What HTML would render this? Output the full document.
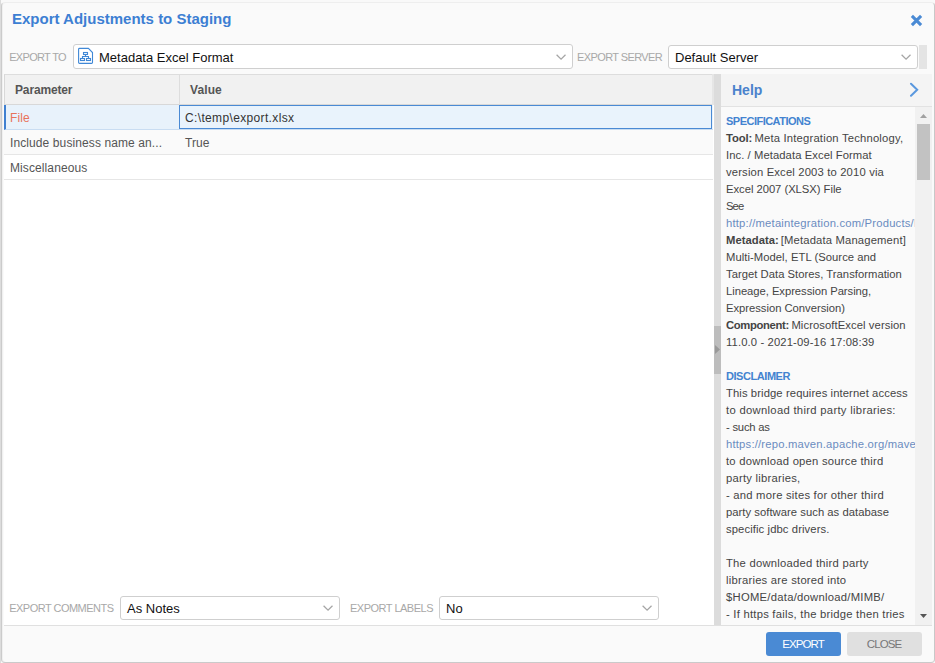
<!DOCTYPE html>
<html><head><meta charset="utf-8">
<style>
*{box-sizing:border-box;margin:0;padding:0}
html,body{width:935px;height:663px;overflow:hidden;background:#f9f9f9;font-family:"Liberation Sans",sans-serif}
.a{position:absolute}
.dlg{left:1px;top:2px;width:934px;height:661px;background:#fafafa;border:1px solid;border-color:#eeeeee #c8c8c8 #cacaca #cbcbcb;border-radius:4px;box-shadow:inset 1px 0 0 #f0f0f0}
.title{left:12px;top:10px;font-size:15px;line-height:18px;font-weight:bold;color:#3d7fd3;white-space:nowrap}
.lbl{font-size:11px;line-height:13px;color:#a8a8a8;white-space:nowrap}
.combo{background:#fff;border:1px solid #cfcfcf;border-radius:3px}
.ctext{font-size:13px;line-height:15px;color:#111;white-space:nowrap}
.chev{position:absolute;width:7px;height:7px;border-right:1px solid #888;border-bottom:1px solid #888;transform:rotate(45deg)}
.cell{font-size:12px;line-height:14px;color:#555;white-space:nowrap;letter-spacing:0.1px}
.hl{font-size:11.25px;line-height:17px;color:#444;white-space:nowrap}
.hl b{letter-spacing:-0.5px}
.hh{color:#4383d0;font-weight:bold}
.hl.hh{font-size:11px}
.hh{color:#4383d0;font-weight:bold}
.lnk{color:#6a8cc0}
.btn{border-radius:3px;font-size:11.5px;text-align:center;line-height:25px;letter-spacing:-0.9px;text-indent:-1px}
</style></head>
<body>
<div class="a" style="left:0;top:0;width:1px;height:663px;background:#dcdcdc"></div>
<div class="a dlg"></div>
<div class="a title">Export Adjustments to Staging</div>
<!-- close X -->
<svg class="a" style="left:910px;top:14px" width="13" height="13" viewBox="0 0 13 13"><path d="M1.9 1.9L11.1 11.1M11.1 1.9L1.9 11.1" stroke="#4a8ad4" stroke-width="3.1"/></svg>

<!-- top row -->
<div class="a lbl" style="left:9.2px;top:51px;letter-spacing:-0.675px">EXPORT TO</div>
<div class="a combo" style="left:73px;top:44px;width:500px;height:25px"></div>
<svg class="a" style="left:74px;top:44px" width="24" height="24" viewBox="0 0 24 24"><g fill="none" stroke="#4088d6" stroke-width="1.1"><path d="M4.6 5.3Q4.6 4.4 5.5 4.4H14.4L18.5 8.5V18.5Q18.5 19.4 17.6 19.4H5.5Q4.6 19.4 4.6 18.5Z"/><rect x="9.5" y="8.5" width="4" height="2"/><rect x="6.5" y="14.5" width="4" height="2"/><rect x="12.5" y="14.5" width="4" height="2"/><path d="M11.5 11V12.5M8.5 14V12.5H14.5V14"/></g></svg>
<div class="a ctext" style="left:99px;top:50px">Metadata Excel Format</div>
<svg class="a" style="left:555px;top:52px" width="12" height="9" viewBox="0 0 12 9"><path d="M1.6 2.7L6.05 7.1L10.5 2.7" fill="none" stroke="#a5a5a5" stroke-width="1.25"/></svg>
<div class="a lbl" style="left:577px;top:51px;letter-spacing:-0.6px">EXPORT SERVER</div>
<div class="a combo" style="left:668px;top:45px;width:250px;height:24px"></div>
<div class="a ctext" style="left:675px;top:50px">Default Server</div>
<svg class="a" style="left:900px;top:52px" width="12" height="9" viewBox="0 0 12 9"><path d="M1.6 2.7L6.05 7.1L10.5 2.7" fill="none" stroke="#a5a5a5" stroke-width="1.25"/></svg>
<div class="a" style="left:919px;top:45px;width:8px;height:24px;background:#e4e4e4"></div>

<!-- table -->
<div class="a" style="left:4px;top:74px;width:710px;height:551px;background:#fff"></div>
<div class="a" style="left:4px;top:74px;width:709px;height:31px;background:#f1f1f1;border-top:1px solid #ddd;border-bottom:1px solid #d8d8d8;border-left:1px solid #d8d8d8"></div>
<div class="a" style="left:179px;top:74px;width:1px;height:31px;background:#ddd"></div>
<div class="a cell" style="left:15px;top:83px;font-weight:bold;color:#555;letter-spacing:-0.15px">Parameter</div>
<div class="a cell" style="left:190px;top:83px;font-weight:bold;color:#555">Value</div>
<!-- row1 selected -->
<div class="a" style="left:4px;top:105px;width:709px;height:25px;background:#e8f2fb;border-bottom:1px solid #c9ddf2;border-left:2px solid #3f80d0"></div>
<div class="a" style="left:179px;top:105px;width:533px;height:24px;border:1px solid #4a8ad4;background:#e9f3fc"></div>
<div class="a cell" style="left:10px;top:111px;color:#e8735a">File</div>
<div class="a cell" style="left:185px;top:111px;color:#333;letter-spacing:0.35px">C:\temp\export.xlsx</div>
<!-- row2 -->
<div class="a" style="left:4px;top:130px;width:709px;height:25px;background:#fafafa;border-bottom:1px solid #e6e6e6"></div>
<div class="a cell" style="left:10px;top:136px">Include business name an...</div>
<div class="a cell" style="left:185px;top:136px">True</div>
<!-- row3 -->
<div class="a" style="left:4px;top:155px;width:709px;height:25px;background:#fff;border-bottom:1px solid #e6e6e6"></div>
<div class="a cell" style="left:10px;top:161px">Miscellaneous</div>

<!-- bottom combos -->
<div class="a lbl" style="left:9.2px;top:602px;letter-spacing:-0.514px">EXPORT COMMENTS</div>
<div class="a combo" style="left:120px;top:596px;width:220px;height:24px"></div>
<div class="a ctext" style="left:127px;top:601px">As Notes</div>
<svg class="a" style="left:322px;top:603px" width="12" height="9" viewBox="0 0 12 9"><path d="M1.6 2.7L6.05 7.1L10.5 2.7" fill="none" stroke="#a5a5a5" stroke-width="1.25"/></svg>
<div class="a lbl" style="left:350.0px;top:602px;letter-spacing:-0.5px">EXPORT LABELS</div>
<div class="a combo" style="left:439px;top:596px;width:220px;height:24px"></div>
<div class="a ctext" style="left:446px;top:601px">No</div>
<svg class="a" style="left:641px;top:603px" width="12" height="9" viewBox="0 0 12 9"><path d="M1.6 2.7L6.05 7.1L10.5 2.7" fill="none" stroke="#a5a5a5" stroke-width="1.25"/></svg>

<!-- splitter -->
<div class="a" style="left:712px;top:74px;width:2px;height:31px;background:#e6e6e6"></div>
<div class="a" style="left:714px;top:74px;width:7px;height:551px;background:#dcdcdc"></div>
<div class="a" style="left:714px;top:326px;width:7px;height:48px;background:#bdbdbd"></div>
<svg class="a" style="left:715px;top:345px" width="5" height="9" viewBox="0 0 5 9"><path d="M0 0L5 4.5L0 9Z" fill="#999"/></svg>

<!-- help -->
<div class="a" style="left:721px;top:74px;width:211px;height:551px;background:#fafafa"></div>
<div class="a" style="left:721px;top:74px;width:211px;height:33px;background:#f4f4f4;border-bottom:1px solid #e2e2e2"></div>
<div class="a hh" style="left:732px;top:82px;font-size:14px;line-height:17px;color:#4a82cc">Help</div>
<svg class="a" style="left:909px;top:82px" width="10" height="15" viewBox="0 0 10 15"><path d="M2 1.8L8.2 7.8L2 13.8" fill="none" stroke="#5a98de" stroke-width="2" stroke-linecap="round"/></svg>
<div class="a" style="left:915px;top:107px;width:17px;height:518px;background:#f1f1f1"></div>
<div class="a" style="left:917px;top:124px;width:13px;height:56px;background:#c2c2c2"></div>
<svg class="a" style="left:920px;top:114px" width="7" height="4" viewBox="0 0 7 4"><path d="M0 4L3.5 0L7 4Z" fill="#a0a0a0"/></svg>
<svg class="a" style="left:920px;top:614px" width="7" height="4" viewBox="0 0 7 4"><path d="M0 0L3.5 4L7 0Z" fill="#555"/></svg>
<!--HELP-->
<div class="a" style="left:721px;top:107px;width:194px;height:518px;overflow:hidden">
<div class="hl hh" style="position:absolute;left:5px;top:6px;letter-spacing:-0.515px">SPECIFICATIONS</div>
<div class="hl" style="position:absolute;left:5px;top:23px;font-weight:bold;letter-spacing:-0.075px">Tool:</div>
<div class="hl" style="position:absolute;left:33.4px;top:23px;letter-spacing:0.193px">Meta Integration Technology,</div>
<div class="hl" style="position:absolute;left:5px;top:40px;letter-spacing:0.07px">Inc. / Metadata Excel Format</div>
<div class="hl" style="position:absolute;left:5px;top:57px;letter-spacing:0.159px">version Excel 2003 to 2010 via</div>
<div class="hl" style="position:absolute;left:5px;top:74px;letter-spacing:-0.033px">Excel 2007 (XLSX) File</div>
<div class="hl" style="position:absolute;left:5px;top:91px;letter-spacing:-0.9px">See</div>
<div class="hl lnk" style="position:absolute;left:5px;top:108px;letter-spacing:0.2px">http://metaintegration.com/Products/MIMB</div>
<div class="hl" style="position:absolute;left:5px;top:125px;font-weight:bold;letter-spacing:0.025px">Metadata:</div>
<div class="hl" style="position:absolute;left:59.8px;top:125px;letter-spacing:0.155px">[Metadata Management]</div>
<div class="hl" style="position:absolute;left:5px;top:142px;letter-spacing:0.041px">Multi-Model, ETL (Source and</div>
<div class="hl" style="position:absolute;left:5px;top:159px;letter-spacing:0.024px">Target Data Stores, Transformation</div>
<div class="hl" style="position:absolute;left:5px;top:176px;letter-spacing:-0.044px">Lineage, Expression Parsing,</div>
<div class="hl" style="position:absolute;left:5px;top:193px;letter-spacing:-0.024px">Expression Conversion)</div>
<div class="hl" style="position:absolute;left:5px;top:210px;font-weight:bold;letter-spacing:-0.344px">Component:</div>
<div class="hl" style="position:absolute;left:70.4px;top:210px;letter-spacing:0.081px">MicrosoftExcel version</div>
<div class="hl" style="position:absolute;left:5px;top:227px;letter-spacing:0.126px">11.0.0 - 2021-09-16 17:08:39</div>
<div class="hl hh" style="position:absolute;left:5px;top:261px;letter-spacing:-0.444px">DISCLAIMER</div>
<div class="hl" style="position:absolute;left:5px;top:278px;letter-spacing:0.097px">This bridge requires internet access</div>
<div class="hl" style="position:absolute;left:5px;top:295px;letter-spacing:0.303px">to download third party libraries:</div>
<div class="hl" style="position:absolute;left:5px;top:312px;letter-spacing:-0.213px">- such as</div>
<div class="hl lnk" style="position:absolute;left:5px;top:329px;letter-spacing:0.2px">https://repo.maven.apache.org/maven2/</div>
<div class="hl" style="position:absolute;left:5px;top:346px;letter-spacing:0.236px">to download open source third</div>
<div class="hl" style="position:absolute;left:5px;top:363px;letter-spacing:0.24px">party libraries,</div>
<div class="hl" style="position:absolute;left:5px;top:380px;letter-spacing:0.226px">- and more sites for other third</div>
<div class="hl" style="position:absolute;left:5px;top:397px;letter-spacing:0.033px">party software such as database</div>
<div class="hl" style="position:absolute;left:5px;top:414px;letter-spacing:0.1px">specific jdbc drivers.</div>
<div class="hl" style="position:absolute;left:5px;top:448px;letter-spacing:0.244px">The downloaded third party</div>
<div class="hl" style="position:absolute;left:5px;top:465px;letter-spacing:0.233px">libraries are stored into</div>
<div class="hl" style="position:absolute;left:5px;top:482px;letter-spacing:0.262px">$HOME/data/download/MIMB/</div>
<div class="hl" style="position:absolute;left:5px;top:499px;letter-spacing:0.237px">- If https fails, the bridge then tries</div>
</div>
<!--/HELP-->

<!-- footer -->
<div class="a" style="left:4px;top:625px;width:928px;height:1px;background:#e0e0e0"></div>
<div class="a btn" style="left:766px;top:632px;width:75px;height:24px;background:#4a8ad4;color:#fff">EXPORT</div>
<div class="a btn" style="left:847px;top:632px;width:75px;height:24px;background:#e0e0e0;color:#777">CLOSE</div>
</body></html>
